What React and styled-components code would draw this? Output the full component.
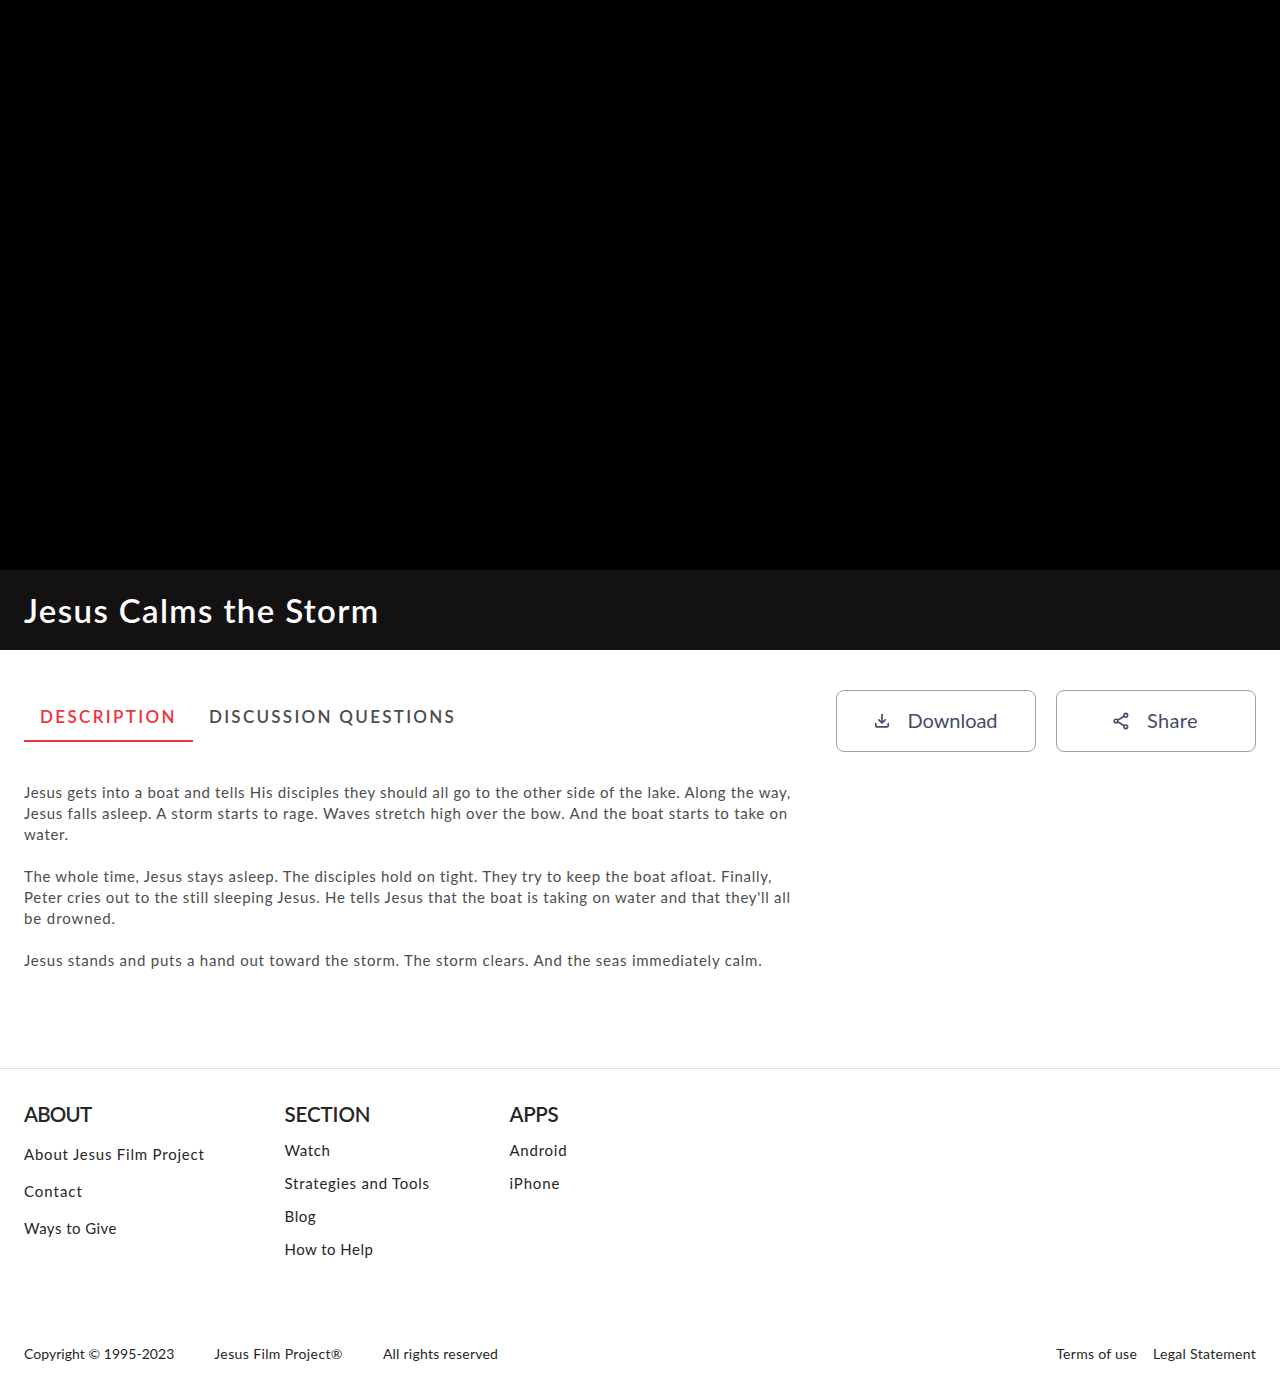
import React from 'react';
import styled, { createGlobalStyle } from 'styled-components';

const GlobalStyle = createGlobalStyle`
  * { box-sizing: border-box; }
  body {
    margin: 0;
    background: #fff;
    font-family: Lato, "Liberation Sans", sans-serif;
    color: #262626;
  }
  h1, h2, p, ul { margin: 0; padding: 0; }
`;

const Page = styled.div`
  display: flex;
  flex-direction: column;
  min-height: 1396px;
`;

const Player = styled.div`
  height: 570px;
  background: #000;
`;

const TitleBar = styled.header`
  display: flex;
  align-items: center;
  height: 80px;
  padding: 0 24px;
  background: #131111;
`;

const Title = styled.h1`
  color: #fff;
  font-size: 33px;
  font-weight: 600;
  line-height: 40px;
  letter-spacing: 1.36px;
  white-space: nowrap;
`;

const Main = styled.main`
  display: flex;
  justify-content: space-between;
  height: 418px;
  padding: 40px 24px 0;
`;

const Content = styled.section`
  display: flex;
  flex-direction: column;
  gap: 40px;
  width: 780px;
`;

const Tabs = styled.div`
  display: flex;
  height: 52px;
`;

const Tab = styled.button`
  width: ${(p) => p.$width}px;
  padding: 3px 0 0 16px;
  border: 0;
  border-bottom: 2px solid ${(p) => (p.$active ? '#ef3340' : 'transparent')};
  background: none;
  color: ${(p) => (p.$active ? '#ef3340' : '#4d4d4d')};
  font: 600 17px/24px Lato, "Liberation Sans", sans-serif;
  letter-spacing: ${(p) => p.$spacing}px;
  text-align: left;
  white-space: nowrap;
`;

const Description = styled.div`
  display: flex;
  flex-direction: column;
  gap: 21px;
  color: #4d4d4d;
  font-size: 15px;
  line-height: 21px;
`;

const Line = styled.span`
  display: block;
  letter-spacing: ${(p) => p.$spacing}px;
  white-space: nowrap;
`;

const Actions = styled.div`
  display: flex;
  gap: 20px;
`;

const ActionButton = styled.button`
  display: flex;
  align-items: center;
  justify-content: center;
  gap: 16px;
  width: 200px;
  height: 62px;
  padding: 0 3px 0 0;
  border: 1px solid #9c9fb4;
  border-radius: 8px;
  background: #fff;
  color: #444b6b;
  font: 400 20px/24px Lato, "Liberation Sans", sans-serif;
  letter-spacing: ${(p) => p.$spacing}px;

  svg { width: 20px; height: 20px; flex: none; }
`;

const ActionLabel = styled.span`
  padding-bottom: 2px;
`;

const Footer = styled.footer`
  display: flex;
  flex-direction: column;
  justify-content: space-between;
  height: 328px;
  padding: 30px 24px 32px;
  border-top: 1px solid #dedfe0;
`;

const Columns = styled.div`
  display: grid;
  grid-template-columns: 260.5px 225px auto;
  justify-content: start;
  align-items: start;
`;

const Heading = styled.h2`
  font-size: 20.5px;
  font-weight: 600;
  line-height: 30px;
  letter-spacing: ${(p) => p.$spacing}px;
`;

const Links = styled.ul`
  display: flex;
  flex-direction: column;
  gap: ${(p) => p.$gap}px;
  padding-top: ${(p) => p.$top}px;
  list-style: none;
  font-size: 15px;
  line-height: 21px;
`;

const LinkItem = styled.li`
  letter-spacing: ${(p) => p.$spacing}px;
  white-space: nowrap;
`;

const Legal = styled.div`
  display: flex;
  justify-content: space-between;
  font-size: 14px;
  line-height: 20px;
`;

const LegalGroup = styled.div`
  display: flex;
  gap: ${(p) => p.$gap}px;
`;

const LegalText = styled.span`
  letter-spacing: ${(p) => p.$spacing}px;
  white-space: nowrap;
`;

const paragraphs = [
  [
    ['Jesus gets into a boat and tells His disciples they should all go to the other side of the lake. Along the way,', 0.676],
    ['Jesus falls asleep. A storm starts to rage. Waves stretch high over the bow. And the boat starts to take on', 0.724],
    ['water.', 0.665],
  ],
  [
    ['The whole time, Jesus stays asleep. The disciples hold on tight. They try to keep the boat afloat. Finally,', 0.704],
    ["Peter cries out to the still sleeping Jesus. He tells Jesus that the boat is taking on water and that they'll all", 0.71],
    ['be drowned.', 0.9],
  ],
  [['Jesus stands and puts a hand out toward the storm. The storm clears. And the seas immediately calm.', 0.767]],
];

const columns = [
  {
    title: 'ABOUT', spacing: -0.8, gap: 16, top: 14.5,
    links: [['About Jesus Film Project', 0.79], ['Contact', 0.98], ['Ways to Give', 0.45]],
  },
  {
    title: 'SECTION', spacing: -0.1, gap: 12, top: 10.5,
    links: [['Watch', 0.6], ['Strategies and Tools', 0.74], ['Blog', 0.6], ['How to Help', 0.46]],
  },
  {
    title: 'APPS', spacing: -0.4, gap: 12, top: 10.5,
    links: [['Android', 0.75], ['iPhone', 0.85]],
  },
];

const DownloadIcon = () => (
  <svg viewBox="0 0 20 20" fill="none" stroke="currentColor" strokeWidth="1.7" strokeLinecap="round" strokeLinejoin="round">
    <path d="M10 3.6v8M6.8 8.8 10 12l3.2-3.2M3.8 12.6v2.2a1 1 0 0 0 1 1h10.4a1 1 0 0 0 1-1v-2.2" />
  </svg>
);

const ShareIcon = () => (
  <svg viewBox="0 0 20 20" fill="none" stroke="currentColor" strokeWidth="1.6">
    <path d="m7 9 6.2-3.8M7 11l6.2 3.8" />
    <circle cx="5" cy="10" r="1.8" />
    <circle cx="14.8" cy="4.2" r="1.8" />
    <circle cx="14.8" cy="15.8" r="1.8" />
  </svg>
);

export default function App() {
  return (
    <Page>
      <GlobalStyle />
      <Player />
      <TitleBar>
        <Title>Jesus Calms the Storm</Title>
      </TitleBar>
      <Main>
        <Content>
          <Tabs>
            <Tab $active $width={169} $spacing={2.35}>DESCRIPTION</Tab>
            <Tab $width={280} $spacing={2.27}>DISCUSSION QUESTIONS</Tab>
          </Tabs>
          <Description>
            {paragraphs.map((lines) => (
              <p key={lines[0][0]}>
                {lines.map(([text, spacing]) => (
                  <Line key={text} $spacing={spacing}>{text}</Line>
                ))}
              </p>
            ))}
          </Description>
        </Content>
        <Actions>
          <ActionButton $spacing={-0.05}>
            <DownloadIcon />
            <ActionLabel>Download</ActionLabel>
          </ActionButton>
          <ActionButton $spacing={0.35}>
            <ShareIcon />
            <ActionLabel>Share</ActionLabel>
          </ActionButton>
        </Actions>
      </Main>
      <Footer>
        <Columns>
          {columns.map((col) => (
            <div key={col.title}>
              <Heading $spacing={col.spacing}>{col.title}</Heading>
              <Links $gap={col.gap} $top={col.top}>
                {col.links.map(([text, spacing]) => (
                  <LinkItem key={text} $spacing={spacing}>{text}</LinkItem>
                ))}
              </Links>
            </div>
          ))}
        </Columns>
        <Legal>
          <LegalGroup $gap={40}>
            <LegalText $spacing={0.04}>Copyright © 1995-2023</LegalText>
            <LegalText $spacing={0.38}>Jesus Film Project®</LegalText>
            <LegalText $spacing={0.24}>All rights reserved</LegalText>
          </LegalGroup>
          <LegalGroup $gap={16}>
            <LegalText $spacing={0.28}>Terms of use</LegalText>
            <LegalText $spacing={0.3}>Legal Statement</LegalText>
          </LegalGroup>
        </Legal>
      </Footer>
    </Page>
  );
}
